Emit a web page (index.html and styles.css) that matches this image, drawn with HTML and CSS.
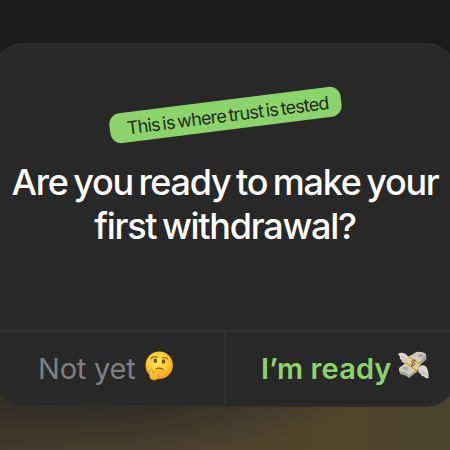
FILE: index.html
```html
<!DOCTYPE html>
<html lang="en">
<head>
<meta charset="utf-8">
<title>Withdrawal</title>
<link rel="stylesheet" href="styles.css">
</head>
<body>
<main class="card">
  <section class="content">
    <div class="badge"><span>This is where trust is tested</span></div>
    <h1 class="title">Are you ready to make your<br>first withdrawal?</h1>
  </section>
  <footer class="actions">
    <button class="action later"><span>Not yet</span>
      <svg class="thinking" viewBox="0 0 28 30">
        <defs>
          <radialGradient id="face" cx=".46" cy=".4" r=".6"><stop offset="0" stop-color="#ffe75a"/><stop offset=".62" stop-color="#fecb32"/><stop offset="1" stop-color="#f09a16"/></radialGradient>
          <linearGradient id="hand" x1="0" y1="0" x2="0" y2="1"><stop offset="0" stop-color="#ffd84c"/><stop offset="1" stop-color="#f8a81c"/></linearGradient>
        </defs>
        <circle cx="14.2" cy="14.2" r="13.7" fill="url(#face)"/>
        <path d="M6 7.6Q8.8 4.4 12.4 6.4M17.4 6.8Q20.4 5.8 22.6 8" fill="none" stroke="#97601a" stroke-width="1.1" stroke-linecap="round"/>
        <ellipse cx="10.3" cy="9.8" rx="1.7" ry="2.3" fill="#72441c"/><ellipse cx="18.5" cy="10.5" rx="1.7" ry="2.3" fill="#72441c"/>
        <path d="M11.2 17.8Q14.6 16.2 18 18.3" fill="none" stroke="#8f5818" stroke-width="1.2" stroke-linecap="round"/>
        <path d="M5 19.2C5.6 17.6 7.4 18 7.3 20L7.8 22.2C10 20.4 14 19.8 17.2 18.9C19 18.5 19.4 20.2 17.8 20.8L13 22.7C14.5 24 14.2 28.8 9.4 29C5.2 29.1 4.6 26.4 4.7 23Z" fill="url(#hand)" stroke="#e48e13" stroke-width=".7"/>
      </svg>
    </button>
    <button class="action ready"><span>I’m ready</span>
      <svg class="money" viewBox="0 0 31 28">
        <path d="M10 7L18.5 1.5Q23 .2 28 3.2L28.6 8L20 16Z" fill="#aaa79b"/>
        <path d="M10 6L18.5 1Q23 0 28 3L20 13Z" fill="#d0cec2"/>
        <path d="M1 18L9 12L20 20L11 27Q8 24 2 23Z" fill="#a5a296"/>
        <path d="M1 17L9 11L20 18L11 24Q8 21 1 20Z" fill="#d0cec2"/>
        <ellipse cx="22.5" cy="4.7" rx="3" ry="1.8" fill="#a8aaa0"/><ellipse cx="7.5" cy="17.3" rx="3" ry="1.9" fill="#adaca2"/>
        <path d="M.5 2.2Q6.6.3 10.5 6.2L10 13Q7 14.3 6 11.5Q3.6 12 3.5 8.8Q1 8 2 5.7Q.1 4.7.5 2.2Z" fill="#dfdacd"/>
        <path d="M20 17.7Q22 12.7 27 14.8Q30.8 17.7 30.6 27Q27.2 28 26 25.2Q23.4 26 22.8 23Q20.2 22 20 17.7Z" fill="#dfdacd"/>
        <path d="M3.4 4.7L9 8.5M4.7 8.4L9 11M23 18L29 25M22 19.5L26 24" fill="none" stroke="#aaa599" stroke-width=".8"/>
        <path d="M10.5 5.5L22.5 13.2L18.7 19.8L7.3 11.5Z" fill="#dfcf9e"/>
        <path d="M10.5 5.5L22.5 13.2M7.3 11.5L18.7 19.8" stroke="#d7a02d" stroke-width="1.3"/>
        <path d="M17.6 10.4C15.8 7.8 12.6 9.5 14.2 11.9C16.2 11.9 18.1 13 15.9 14.5C14.5 15.3 13 14.2 12.7 13M17.3 8.5L13.3 15.8" fill="none" stroke="#6b582c" stroke-width=".95"/>
      </svg>
    </button>
  </footer>
</main>
</body>
</html>
```
FILE: styles.css
```css
* { box-sizing: border-box; }
body {
  margin: 0;
  height: 450px;
  padding-top: 43px;
  overflow: hidden;
  font-family: Inter, "Liberation Sans", sans-serif;
  background:
    radial-gradient(ellipse 260px 48px at 100px 402px, rgba(44, 44, 38, .95), rgba(44, 44, 38, 0)),
    linear-gradient(90deg, #41392a 0, #4b402b 42%, #53462c 75%, #4a442d 100%) 0 390px / 100% 60px no-repeat,
    #1c1c1c;
}
.card {
  display: flex;
  flex-direction: column;
  width: 464px;
  height: 364px;
  margin-left: -7px;
  overflow: hidden;
  border: 2px solid #2e2e2e;
  border-radius: 31px;
  background: #282828;
}
.content {
  display: flex;
  flex: 1;
  flex-direction: column;
  align-items: center;
  padding-top: 55px;
}
.badge {
  display: flex;
  align-items: center;
  width: 233px;
  height: 30px;
  padding-left: 17px;
  border-radius: 11px;
  transform: rotate(-7.2deg);
  background: #8dd36b;
  color: #202b1b;
  font-size: 18px;
  letter-spacing: -.81px;
  word-spacing: -1.4px;
  white-space: nowrap;
}
.title {
  margin: 30px 0 0;
  color: #fff;
  font-size: 36px;
  font-weight: 500;
  line-height: 44px;
  letter-spacing: -1.25px;
  word-spacing: -2.8px;
  text-align: center;
  white-space: nowrap;
}
.actions {
  display: grid;
  grid-template-columns: 231px 1fr;
  height: 75px;
  border-top: 2px solid #303030;
}
.action {
  display: flex;
  align-items: center;
  padding: 0;
  border: 0;
  background: none;
  font: 400 29px/38px Inter, "Liberation Sans", sans-serif;
  white-space: nowrap;
}
.later {
  gap: 9px;
  padding-left: 43px;
  border-right: 2px solid #303030;
  color: #808080;
  letter-spacing: -.2px;
}
.ready {
  gap: 7px;
  padding-left: 35px;
  color: #8dd36b;
  font-weight: 600;
  letter-spacing: .1px;
}
.thinking { width: 28px; height: 30px; margin-top: -5px; }
.money { width: 31px; height: 28px; margin-top: -7px; }
```
